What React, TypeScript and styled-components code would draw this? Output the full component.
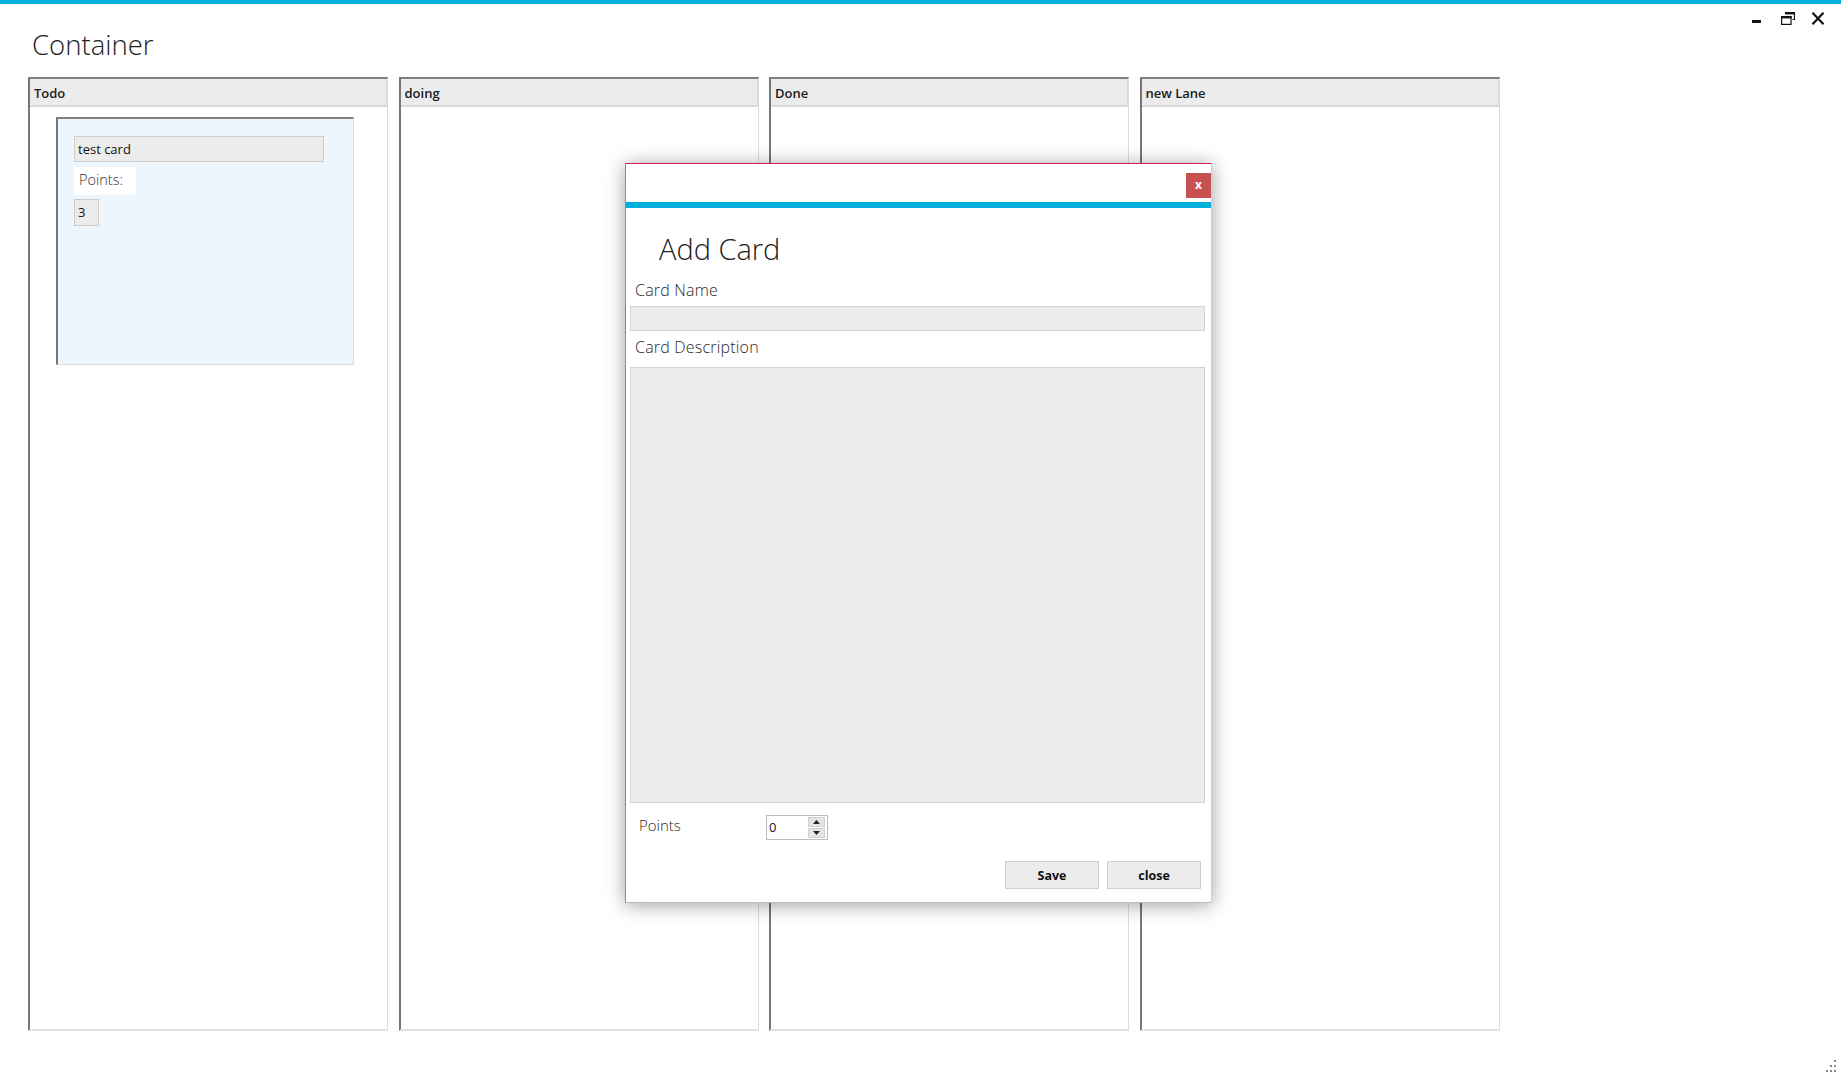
import React from "react";
import styled, { createGlobalStyle } from "styled-components";

const GlobalStyle = createGlobalStyle`
  html, body { margin: 0; padding: 0; background: #ffffff; }
  body { font-family: "Open Sans", "Noto Sans", sans-serif; color: #1e1e1e; }
  * { box-sizing: border-box; }
`;

const Page = styled.div`
  position: relative;
  width: 1841px;
  height: 1078px;
  overflow: hidden;
  background: #ffffff;
`;

const TopAccent = styled.div`
  height: 4px;
  background: #03b1df;
`;

const TitleRow = styled.div`
  display: flex;
  justify-content: space-between;
  align-items: flex-start;
  padding: 0 16px 0 32px;
`;

const Title = styled.h1`
  margin: 23px 0 0 0;
  font-size: 27.5px;
  line-height: 36px;
  font-weight: 300;
  color: #222;
`;

const WindowControls = styled.div`
  display: flex;
  align-items: flex-start;
  gap: 16px;
  margin-top: 8px;
`;

const ControlIcon = styled.svg`
  display: block;
  width: 14px;
  height: 13px;
`;

const Board = styled.div`
  display: flex;
  gap: 10.5px;
  padding-left: 28px;
  margin-top: 14px;
`;

const Lane = styled.section`
  width: 360px;
  height: 954px;
  display: flex;
  flex-direction: column;
  background: #ffffff;
  border-left: 2px solid #777777;
  border-top: 2px solid #808080;
  border-right: 1px solid #dcdcdc;
  border-bottom: 2px solid #e2e2e2;
`;

const LaneHeader = styled.div`
  height: 28px;
  padding: 1px 0 0 4px;
  background: #ececec;
  border-bottom: 2px solid #dadada;
  border-right: 1px solid #dadada;
  font-size: 13px;
  font-weight: 600;
  line-height: 26px;
  color: #1b1b1b;
`;

const LaneBody = styled.div`
  flex: 1;
  padding: 10px 0 0 26px;
`;

const Card = styled.div`
  width: 298px;
  height: 248px;
  background: #eef6fd;
  border-left: 2px solid #777777;
  border-top: 2px solid #808080;
  border-right: 1px solid #dcdcdc;
  border-bottom: 1px solid #dcdcdc;
  padding: 17px 0 0 16px;
  display: flex;
  flex-direction: column;
  align-items: flex-start;
`;

const CardName = styled.div`
  width: 250px;
  height: 26px;
  background: #ececec;
  border: 1px solid #cdcdcd;
  padding-left: 3px;
  font-size: 13px;
  line-height: 24px;
  color: #111;
`;

const CardPointsLabel = styled.div`
  width: 62px;
  height: 28px;
  margin-top: 5px;
  background: #ffffff;
  padding-left: 5px;
  font-size: 14.5px;
  font-weight: 300;
  line-height: 26px;
  color: #333;
`;

const CardPointsValue = styled.div`
  width: 25px;
  height: 27px;
  margin-top: 4px;
  background: #ececec;
  border: 1px solid #cdcdcd;
  padding-left: 3px;
  font-size: 13px;
  line-height: 25px;
  color: #111;
`;

const Modal = styled.div`
  position: absolute;
  left: 625px;
  top: 163px;
  width: 587px;
  height: 740px;
  background: #ffffff;
  border-left: 1px solid #8c8c8c;
  border-right: 1px solid #cfcfcf;
  border-bottom: 1px solid #bdbdbd;
  border-top: 1px solid #d31b5c;
  box-shadow: 0 2px 18px rgba(0, 0, 0, 0.38);
  display: flex;
  flex-direction: column;
`;

const ModalTitleBar = styled.div`
  height: 38px;
  display: flex;
  justify-content: flex-end;
  align-items: flex-start;
  padding-top: 9px;
`;

const CloseButton = styled.button`
  width: 25px;
  height: 25px;
  border: none;
  padding: 0 0 2px 0;
  margin: 0;
  background: #c75050;
  color: #ffffff;
  font-family: "Open Sans", sans-serif;
  font-size: 12px;
  font-weight: 700;
  line-height: 23px;
  text-align: center;
`;

const ModalAccent = styled.div`
  height: 6px;
  background: #03b0dc;
`;

const ModalContent = styled.div`
  flex: 1;
  display: flex;
  flex-direction: column;
  padding: 0 6px 0 4px;
`;

const ModalHeading = styled.h2`
  margin: 21px 0 0 29px;
  font-size: 29px;
  font-weight: 300;
  line-height: 40px;
  color: #222;
`;

const FieldLabel = styled.label<{ $top: number }>`
  display: block;
  margin: ${(p) => p.$top}px 0 0 5px;
  font-size: 16px;
  font-weight: 300;
  letter-spacing: 0.2px;
  line-height: 24px;
  color: #2a2a2a;
`;

const TextInput = styled.div`
  margin-top: 4px;
  height: 25px;
  background: #ececec;
  border: 1px solid #d2d2d2;
`;

const TextArea = styled.div`
  margin-top: 8px;
  height: 436px;
  background: #ececec;
  border: 1px solid #d2d2d2;
`;

const PointsRow = styled.div`
  display: flex;
  align-items: flex-start;
  margin-top: 10px;
  padding-left: 9px;
`;

const PointsLabel = styled.span`
  width: 127px;
  font-size: 15px;
  font-weight: 300;
  line-height: 24px;
  color: #2a2a2a;
`;

const Spinner = styled.div`
  margin-top: 2px;
  width: 62px;
  height: 25px;
  display: flex;
  align-items: center;
  border: 1px solid #bcbcbc;
  background: #ffffff;
  padding-right: 2px;
`;

const SpinnerValue = styled.span`
  flex: 1;
  padding-left: 2px;
  font-size: 13px;
  line-height: 23px;
  color: #1a1a1a;
`;

const SpinnerButtons = styled.div`
  width: 17px;
  display: flex;
  flex-direction: column;
  gap: 1px;
`;

const SpinnerButton = styled.div`
  height: 10px;
  background: #e4e4e4;
  border: 1px solid #d0d0d0;
  display: flex;
  align-items: center;
  justify-content: center;
`;

const ButtonRow = styled.div`
  display: flex;
  justify-content: flex-end;
  gap: 8px;
  margin-top: 21px;
  padding-right: 4px;
`;

const DialogButton = styled.button`
  width: 94px;
  height: 28px;
  background: #ececec;
  border: 1px solid #d0d0d0;
  font-family: "Open Sans", sans-serif;
  font-size: 12.5px;
  font-weight: 700;
  color: #111;
  padding: 0;
`;

const Grip = styled.svg`
  position: absolute;
  right: 4px;
  bottom: 5px;
  width: 14px;
  height: 14px;
`;

const lanes = ["Todo", "doing", "Done", "new Lane"];

const Triangle = ({ up }: { up: boolean }) => (
  <svg width="7" height="4" viewBox="0 0 7 4">
    <path d={up ? "M0 4 L3.5 0 L7 4 Z" : "M0 0 L3.5 4 L7 0 Z"} fill="#222" />
  </svg>
);

export default function App() {
  return (
    <Page>
      <GlobalStyle />
      <TopAccent />
      <TitleRow>
        <Title>Container</Title>
        <WindowControls>
          <ControlIcon viewBox="0 0 14 13">
            <rect x="1" y="8" width="9" height="3" fill="#111" />
          </ControlIcon>
          <ControlIcon viewBox="0 0 14 13">
            <path d="M4 0.5 H13.5 V7.5 H11.5" fill="none" stroke="#111" strokeWidth="1.2" />
            <rect x="4" y="0" width="9.5" height="2.4" fill="#111" />
            <rect x="0.6" y="4.6" width="9.4" height="7.8" fill="#fff" stroke="#111" strokeWidth="1.2" />
            <rect x="0" y="4" width="10.6" height="2.4" fill="#111" />
          </ControlIcon>
          <ControlIcon viewBox="0 0 14 13">
            <path d="M1.5 0.8 L12.5 12.2 M12.5 0.8 L1.5 12.2" stroke="#111" strokeWidth="2.2" />
          </ControlIcon>
        </WindowControls>
      </TitleRow>
      <Board>
        {lanes.map((name) => (
          <Lane key={name}>
            <LaneHeader>{name}</LaneHeader>
            <LaneBody>
              {name === "Todo" && (
                <Card>
                  <CardName>test card</CardName>
                  <CardPointsLabel>Points:</CardPointsLabel>
                  <CardPointsValue>3</CardPointsValue>
                </Card>
              )}
            </LaneBody>
          </Lane>
        ))}
      </Board>

      <Modal>
        <ModalTitleBar>
          <CloseButton>x</CloseButton>
        </ModalTitleBar>
        <ModalAccent />
        <ModalContent>
          <ModalHeading>Add Card</ModalHeading>
          <FieldLabel $top={9}>Card Name</FieldLabel>
          <TextInput />
          <FieldLabel $top={4}>Card Description</FieldLabel>
          <TextArea />
          <PointsRow>
            <PointsLabel>Points</PointsLabel>
            <Spinner>
              <SpinnerValue>0</SpinnerValue>
              <SpinnerButtons>
                <SpinnerButton>
                  <Triangle up />
                </SpinnerButton>
                <SpinnerButton>
                  <Triangle up={false} />
                </SpinnerButton>
              </SpinnerButtons>
            </Spinner>
          </PointsRow>
          <ButtonRow>
            <DialogButton>Save</DialogButton>
            <DialogButton>close</DialogButton>
          </ButtonRow>
        </ModalContent>
      </Modal>

      <Grip viewBox="0 0 14 14">
        <rect x="11" y="1" width="2" height="2" fill="#8a8a8a" />
        <rect x="7" y="6" width="2" height="2" fill="#8a8a8a" />
        <rect x="11" y="6" width="2" height="2" fill="#8a8a8a" />
        <rect x="3" y="11" width="2" height="2" fill="#8a8a8a" />
        <rect x="7" y="11" width="2" height="2" fill="#8a8a8a" />
        <rect x="11" y="11" width="2" height="2" fill="#8a8a8a" />
      </Grip>
    </Page>
  );
}
